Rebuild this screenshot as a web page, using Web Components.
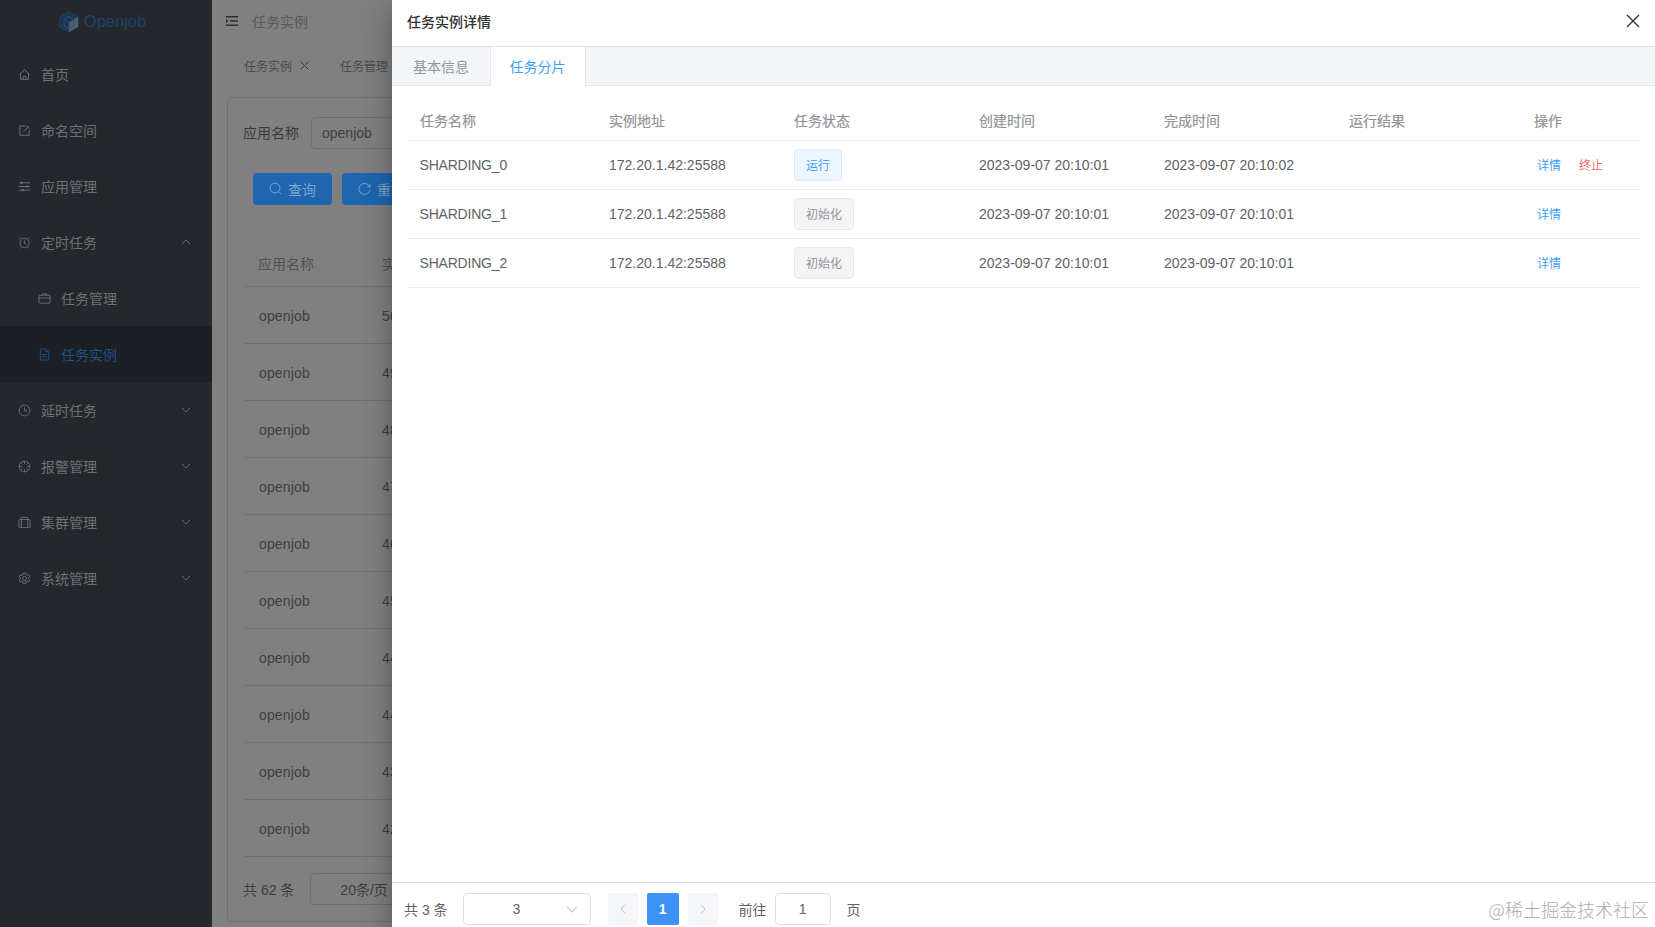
<!DOCTYPE html>
<html lang="zh">
<head>
<meta charset="utf-8">
<title>Openjob</title>
<style>
html,body{margin:0;padding:0;height:100%;}
body{font:14px "Liberation Sans","Noto Sans CJK SC",sans-serif;width:1655px;height:927px;overflow:hidden;position:relative;display:flex;background:#808080;}
</style>
</head>
<body>
<oj-sidebar>
  <oj-nav icon="home" label="首页"></oj-nav>
  <oj-nav icon="edit" label="命名空间"></oj-nav>
  <oj-nav icon="sliders" label="应用管理"></oj-nav>
  <oj-nav icon="alarm" label="定时任务" arrow="up"></oj-nav>
  <oj-nav icon="case" label="任务管理" sub></oj-nav>
  <oj-nav icon="doc" label="任务实例" sub active></oj-nav>
  <oj-nav icon="clock" label="延时任务" arrow="down"></oj-nav>
  <oj-nav icon="aperture" label="报警管理" arrow="down"></oj-nav>
  <oj-nav icon="bag" label="集群管理" arrow="down"></oj-nav>
  <oj-nav icon="gear" label="系统管理" arrow="down"></oj-nav>
</oj-sidebar>
<oj-main></oj-main>
<oj-drawer title-text="任务实例详情">
  <oj-shards></oj-shards>
  <oj-pager slot="footer"></oj-pager>
</oj-drawer>
<oj-watermark>@稀土掘金技术社区</oj-watermark>

<script>
const ICONS = {
  home:'<path d="M1.5 7 7 1.8 12.5 7M2.8 6v6.2h8.4V6M5.5 12.2V9h3v3.2"/>',
  edit:'<path d="M8 2.2H2v10h10V6.5M6 8.2 12.2 2"/><path d="M9 2.2 12 5"/>',
  sliders:'<path d="M1 3h12M1 7h12M1 11h12"/><path d="M4 1.8v2.4M9.5 5.8v2.4M5 9.8v2.4" stroke-width="2"/>',
  alarm:'<circle cx="7" cy="7.5" r="5"/><path d="M7 4.8v2.9l2 1M1 3.4 3 1.4M13 3.4l-2-2M3.5 12.2l-1 1.2M10.5 12.2l1 1.2"/>',
  case:'<rect x="1" y="3.5" width="12" height="8.5" rx="1"/><path d="M4.5 3.5V2h5v1.5M1 6.5h12"/>',
  doc:'<path d="M2.5 1h6l3 3v9h-9zM8.5 1v3h3M4.5 7h5M4.5 9.5h5"/>',
  clock:'<circle cx="7" cy="7" r="5.8"/><path d="M7 3.5V7.4h3.2"/>',
  aperture:'<circle cx="7" cy="7" r="5.8"/><path d="M7 1.2v3M7 9.8v3M1.2 7h3M9.8 7h3M5 5l-1.5-1.5M9 5l1.5-1.5M5 9l-1.5 1.5M9 9l1.5 1.5"/>',
  bag:'<rect x="1" y="3.8" width="12" height="8.7" rx="1"/><path d="M3.5 3.8V1.5h7v2.3M3.5 3.8v8.7M10.5 3.8v8.7"/>',
  gear:'<path d="M5.8 1h2.4l.4 1.7 1.3.7 1.6-.6 1.2 2-1.3 1.2v1.5l1.3 1.2-1.2 2-1.6-.6-1.3.7-.4 1.7H5.8l-.4-1.7-1.3-.7-1.6.6-1.2-2L2.600 7.800V6.200L1.300 5l1.200-2 1.600.6 1.300-.7z"/><circle cx="7" cy="7" r="2.200"/>',
  search:'<circle cx="6.500" cy="6.500" r="5.300"/><path d="m10.500 10.500 2.500 2.500"/>',
  refresh:'<path d="M12.500 5A6 6 0 1 0 13 8"/><path d="M12.800 2v3.200H9.600"/>'
};
const svg = (name,size=14)=>`<svg width="${size}" height="${size}" viewBox="0 0 14 14" fill="none" stroke="currentColor" stroke-width="1" aria-hidden="true">${ICONS[name]}</svg>`;
const chevron = (dir,c)=>`<svg width="10" height="6" viewBox="0 0 10 6" fill="none" stroke="${c}" stroke-width="1"><path d="${dir==='up'?'M.8 5.200 5 1l4.200 4.200':'M.8 .8 5 5l4.200-4.200'}"/></svg>`;

function define(tag, render){
  customElements.define(tag, class extends HTMLElement{
    constructor(){super();this.attachShadow({mode:'open'});}
    connectedCallback(){this.shadowRoot.innerHTML = render(this);}
  });
}

define('oj-sidebar',()=>`<style>
:host{display:block;flex:0 0 212px;width:212px;height:927px;background:#24282c;}
.logo{height:46px;display:flex;align-items:center;justify-content:center;gap:5px;padding-right:7px;box-sizing:border-box;color:#1e4268;font-size:16.500px;}
.logo svg{display:block;margin-top:-3px;}
.logo span{margin-top:-3px;}
</style>
<div class="logo"><svg width="20" height="22" viewBox="0 0 20 22" fill="none">
<path d="M10 1 19 6v10l-9 5-9-5V6z" fill="#1b3550" stroke="#1f4468"/>
<path d="M10 11l9-5v10l-9 5z" fill="#4f626c"/>
<path d="M5 8.500 10 5.500l5 3v6l-5 3-5-3zM5 8.500l5 3 5-3M10 11.500v6" stroke="#264f78" fill="none"/>
</svg><span>Openjob</span></div>
<slot></slot>`);

define('oj-nav',el=>{
  const sub = el.hasAttribute('sub'), act = el.hasAttribute('active'), arrow = el.getAttribute('arrow');
  return `<style>
:host{display:flex;align-items:center;height:56px;box-sizing:border-box;padding-left:${sub?38:18}px;padding-right:21px;gap:10px;
background:${act?'#1c1f23':'transparent'};color:${act?'#1f4f85':'#6c7075'};font-size:14px;}
svg{display:block;flex:none;}
.l{flex:1;}
</style>${svg(el.getAttribute('icon'),13)}<span class="l">${el.getAttribute('label')}</span>${arrow?chevron(arrow,'#666a6f'):''}`;
});

const ROWS = ['50','49','48','47','46','45','44','44','43','42'];
define('oj-main',()=>`<style>
:host{display:block;flex:0 0 180px;width:180px;height:927px;overflow:hidden;background:#808080;color:#3f3f3f;}
.top{height:46px;display:flex;align-items:center;gap:14px;padding:0 0 4px 14px;color:#5a5a5a;box-sizing:border-box;}
.top svg{display:block;color:#2e2e2e;}
.tabs{height:39px;display:flex;align-items:center;padding-left:32px;font-size:12px;color:#4c4c4c;box-sizing:border-box;white-space:nowrap;}
.tabs .x{margin:0 0 0 8px;color:#3c3c3c;display:block;}
.tabs span.t2{margin-left:31px;}
.card{margin:12px 0 0 15px;width:1400px;height:825px;border:1px solid #717171;border-radius:4px 0 0 4px;box-sizing:border-box;padding:19px 0 0 15px;}
.form{display:flex;align-items:center;gap:12px;height:32px;}
.form b{font-weight:400;color:#3a3a3a;padding-bottom:2px;}
.input{width:200px;height:32px;border:1px solid #6f6f6f;border-radius:4px 0 0 4px;box-sizing:border-box;display:flex;align-items:center;padding-left:10px;color:#404040;}
.btns{display:flex;gap:10px;margin:24px 0 0 10px;}
.btn{width:79px;height:32px;background:#1f66b0;border-radius:4px;color:#7fa3c9;display:flex;align-items:center;justify-content:center;gap:6px;flex:none;padding-bottom:1px;box-sizing:border-box;}
.btn svg{display:block;}
.tbl{margin:36px 0 0 1px;}
.r{display:grid;grid-template-columns:123px 1fr;height:57px;align-items:center;border-bottom:1px solid #717171;box-sizing:border-box;padding-left:15px;letter-spacing:.15px;}
.r>span{padding-top:2px;}
.r.h{height:46px;color:#525252;padding-left:14px;grid-template-columns:124px 1fr;letter-spacing:0;}
.r.h>span{padding:0 0 2px;}
.foot{display:flex;align-items:center;gap:16px;margin-top:16px;height:32px;}
.sel{width:200px;height:32px;border:1px solid #6f6f6f;border-radius:4px 0 0 4px;box-sizing:border-box;padding-left:29px;display:flex;align-items:center;color:#3f3f3f;}
</style>
<div class="top"><svg width="12" height="10" viewBox="0 0 12 10" fill="currentColor"><path d="M0 0h12v1.500H0zM4 4.200h8v1.500H4zM0 8.500h12V10H0zM0 3l2.500 2L0 7z"/></svg><span>任务实例</span></div>
<div class="tabs"><span>任务实例</span><svg class="x" width="9" height="9" viewBox="0 0 9 9" stroke="currentColor" fill="none"><path d="m.5.500 8 8M8.500.500l-8 8"/></svg><span class="t2">任务管理</span></div>
<div class="card">
 <div class="form"><b>应用名称</b><div class="input">openjob</div></div>
 <div class="btns"><div class="btn">${svg('search',13)}<span>查询</span></div><div class="btn">${svg('refresh',13)}<span>重置</span></div></div>
 <div class="tbl">
  <div class="r h"><span>应用名称</span><span>实例</span></div>
  ${ROWS.map(n=>`<div class="r"><span>openjob</span><span>${n}</span></div>`).join('')}
 </div>
 <div class="foot"><span>共 62 条</span><div class="sel">20条/页</div></div>
</div>`);

define('oj-drawer',el=>`<style>
:host{display:flex;flex-direction:column;position:absolute;left:392px;top:0;width:1263px;height:927px;background:#fff;
box-shadow:0 8px 10px -5px rgba(0,0,0,.2),0 16px 24px 2px rgba(0,0,0,.14),0 6px 30px 5px rgba(0,0,0,.12);color:#606266;}
.hd{height:47px;flex:none;box-sizing:border-box;border-bottom:1px solid #dcdfe6;display:flex;align-items:center;justify-content:space-between;padding:0 15px 4px;color:#303133;font-weight:500;font-size:14px;}
.hd span{margin-top:-1px;}
.hd svg{display:block;}
.tabs{height:39px;flex:none;box-sizing:border-box;background:#f3f6f9;border-bottom:1px solid #e4e7ed;display:flex;}
.tab{height:38px;box-sizing:border-box;padding:0 21px;display:flex;align-items:center;color:#909399;flex:none;}
.tab.on{background:#fff;color:#409eff;border:solid #e4e7ed;border-width:0 1px;padding:0 19px 1px;height:39px;margin-left:-.5px;}
.body{flex:1;min-height:0;padding:15px 14px 0 16px;}
.ft{flex:none;height:45px;box-sizing:border-box;border-top:1px solid #dcdfe6;}
</style>
<div class="hd"><span>${el.getAttribute('title-text')}</span><svg width="14" height="14" viewBox="0 0 14 14" stroke="#303133" stroke-width="1.300" fill="none"><path d="m1 1 12 12M13 1 1 13"/></svg></div>
<div class="tabs"><div class="tab">基本信息</div><div class="tab on">任务分片</div></div>
<div class="body"><slot></slot></div>
<div class="ft"><slot name="footer"></slot></div>`);

const SHARDS = [
 ['SHARDING_0','运行','run','2023-09-07 20:10:02',true],
 ['SHARDING_1','初始化','init','2023-09-07 20:10:01',false],
 ['SHARDING_2','初始化','init','2023-09-07 20:10:01',false]
];
define('oj-shards',()=>`<style>
:host{display:block;width:1233px;}
.r{display:grid;grid-template-columns:189px 185px 185px 185px 185px 185px 119px;align-items:center;height:49px;border-bottom:1px solid #ebeef5;box-sizing:border-box;}
.r>*{padding-left:12px;white-space:nowrap;}
.r>.n{letter-spacing:-.2px;padding-left:11.500px;}
.r.h{height:40px;padding-bottom:1px;color:#909399;font-weight:400;}
.r.h>*{-webkit-text-stroke:.2px #909399;}
.tag{display:inline-flex;align-items:center;height:32px;box-sizing:border-box;border-radius:4px;padding:0 11px 2px;font-size:12px;border:1px solid;}
.run{background:#ecf5ff;border-color:#d9ecff;color:#409eff;}
.init{background:#f4f4f5;border-color:#e9e9eb;color:#909399;}
.ops{display:flex;gap:18px;font-size:12px;padding-left:15px;color:#409eff;padding-bottom:1px;}
.ops i{font-style:normal;color:#f56c6c;}
</style>
<div class="r h"><span>任务名称</span><span>实例地址</span><span>任务状态</span><span>创建时间</span><span>完成时间</span><span>运行结果</span><span>操作</span></div>
${SHARDS.map(s=>`<div class="r"><span class="n">${s[0]}</span><span>172.20.1.42:25588</span><span><span class="tag ${s[2]}">${s[1]}</span></span><span>2023-09-07 20:10:01</span><span>${s[3]}</span><span></span><span class="ops"><span>详情</span>${s[4]?'<i>终止</i>':''}</span></div>`).join('')}`);

define('oj-pager',()=>`<style>
:host{display:flex;align-items:center;height:32px;margin-top:10px;padding-left:12px;color:#606266;font-size:14px;}
.sel{width:128px;height:32px;margin-left:15px;box-sizing:border-box;border:1px solid #dcdfe6;border-radius:4px;display:flex;align-items:center;padding:0 12px 0 49px;justify-content:space-between;}
.sel span{width:8px;}
.b{width:30px;height:32px;background:#f4f6f9;border-radius:2px;display:flex;align-items:center;justify-content:center;color:#c0c4cc;}
.b svg{display:block;}
.prev{margin-left:17px;}
.on{width:32px;margin:0 9px;background:#3d93f5;color:#fff;font-weight:700;}
.go{margin-left:21px;}
.in{width:56px;height:32px;margin:0 16px 0 8px;box-sizing:border-box;border:1px solid #dcdfe6;border-radius:4px;display:flex;align-items:center;justify-content:center;}
</style>
<span>共 3 条</span>
<div class="sel"><span>3</span>${chevron('down','#c0c4cc').replace('width="10" height="6"','width="12" height="7"')}</div>
<div class="b prev"><svg width="6" height="10" viewBox="0 0 6 10" fill="none" stroke="currentColor"><path d="M5 .8 1 5l4 4.200"/></svg></div>
<div class="b on">1</div>
<div class="b"><svg width="6" height="10" viewBox="0 0 6 10" fill="none" stroke="currentColor"><path d="m1 .8 4 4.200-4 4.200"/></svg></div>
<span class="go">前往</span><div class="in">1</div><span>页</span>`);

define('oj-watermark',()=>`<style>
:host{position:absolute;right:6px;top:897px;font-size:18px;line-height:24px;color:#adadad;font-family:"Noto Sans CJK SC","Liberation Serif",serif;font-weight:300;white-space:nowrap;}
</style><slot></slot>`);
</script>
</body>
</html>
